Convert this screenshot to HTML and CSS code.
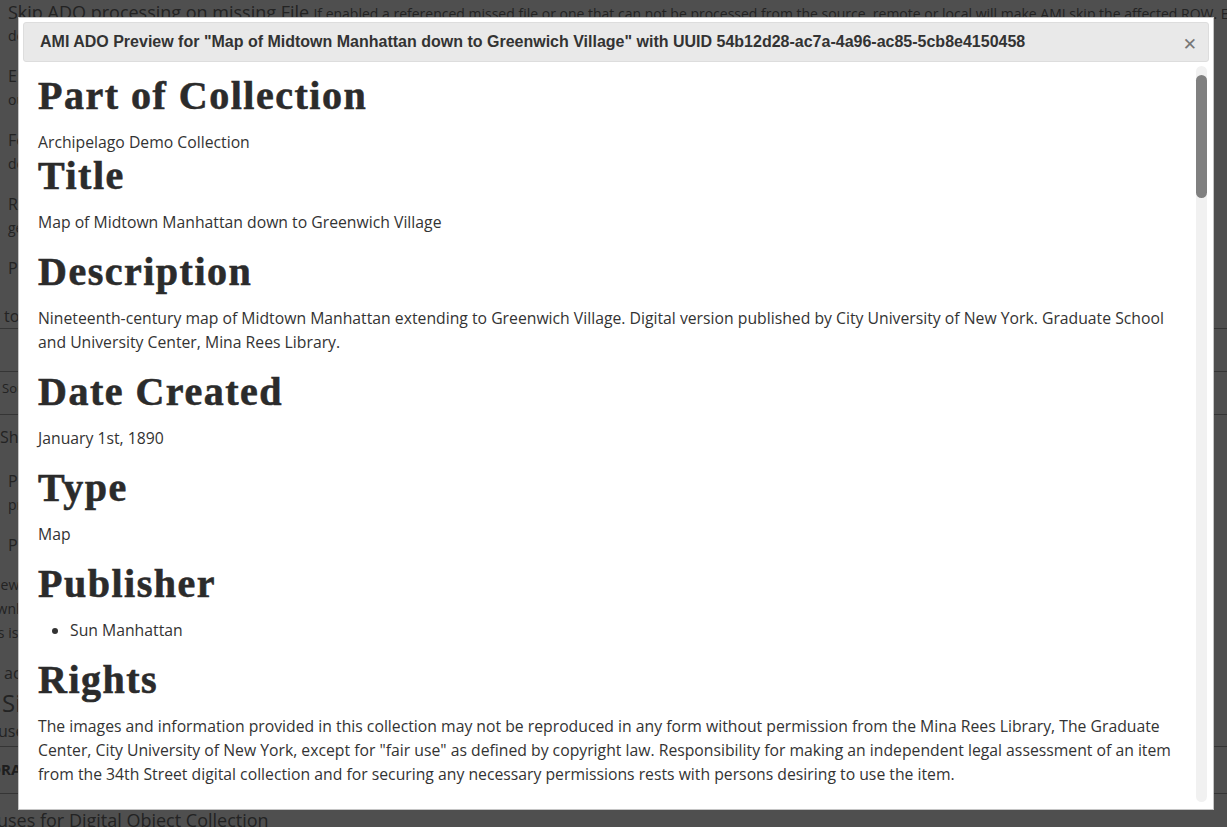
FILE: index.html
```html
<!DOCTYPE html>
<html lang="en">
<head>
<meta charset="utf-8">
<title>AMI ADO Preview</title>
<link rel="stylesheet" href="styles.css">
</head>
<body>
<div class="page">
  <div class="row"><span class="lbl-lg">Skip ADO processing on missing File</span> <span class="desc">If enabled a referenced missed file or one that can not be processed from the source, remote or local will make AMI skip the affected ROW. Enabled</span></div>
  <div class="row desc">default is disabled and the ROW will be processed without the missing file.</div>
  <div class="row gap16">Enable this to send a message to the Watchdog log for every Row processed. This allows more granular and individua</div>
  <div class="row desc">output of errors and processing information for each ADO.</div>
  <div class="row gap16">Fetch remote files during the processing of each ROW</div>
  <div class="row desc">default is to fetch them.</div>
  <div class="row gap16">Request Immediate Processing of all ADOs once they are ingested so they are ready to be displayed with all their alrea dy</div>
  <div class="row desc">generated derivatives and thumbnails.</div>
  <div class="row gap16">Process</div>
  <div class="row gap24 shift">to Digital Object Collection</div>
  <div class="trow"></div>
  <div class="trow small shift2">Source</div>
  <div class="trow shift3">Show row weights</div>
  <div class="row gap10">Pick</div>
  <div class="row desc">preview</div>
  <div class="row gap16">Process all rows. Please select the type of processing you want for this set and proceed with ingest and make sure you have a fit for the servi ce</div>
  <div class="row desc gap16 neg">Preview and verify before</div>
  <div class="row desc neg2">Download</div>
  <div class="row desc neg3">This is b</div>
  <div class="row gap16 shift">access</div>
  <div class="row big shift2">Single</div>
  <div class="row neg4">uses</div>
  <div class="brow"><b>DRAFT</b></div>
  <div class="brow2 lbl-lg">uses for Digital Object Collection</div>
</div>
<div class="overlay"></div>
<div class="dialog">
  <div class="titlebar">
    <span class="title">AMI ADO Preview for "Map of Midtown Manhattan down to Greenwich Village" with UUID 54b12d28-ac7a-4a96-ac85-5cb8e4150458</span>
    <span class="close">&#x2715;</span>
  </div>
  <div class="dialog-body">
    <div class="content">
      <h2>Part of Collection</h2>
      <div class="value first">Archipelago Demo Collection</div>
      <h2>Title</h2>
      <p>Map of Midtown Manhattan down to Greenwich Village</p>
      <h2>Description</h2>
      <p>Nineteenth-century map of Midtown Manhattan extending to Greenwich Village. Digital version published by City University of New York. Graduate School and University Center, Mina Rees Library.</p>
      <h2>Date Created</h2>
      <p>January 1st, 1890</p>
      <h2>Type</h2>
      <p>Map</p>
      <h2>Publisher</h2>
      <ul>
        <li>Sun Manhattan</li>
      </ul>
      <h2>Rights</h2>
      <p>The images and information provided in this collection may not be reproduced in any form without permission from the Mina Rees Library, The Graduate Center, City University of New York, except for "fair use" as defined by copyright law. Responsibility for making an independent legal assessment of an item from the 34th Street digital collection and for securing any necessary permissions rests with persons desiring to use the item.</p>
    </div>
    <div class="scrollbar"><div class="thumb"></div></div>
  </div>
</div>
</body>
</html>
```

FILE: styles.css
```css
html, body {
  margin: 0;
  padding: 0;
  height: 100%;
  overflow: hidden;
}
body {
  background: #ffffff;
  font-family: "Open Sans", "Noto Sans", sans-serif;
  color: #707070;
  font-size: 16px;
}
.page {
  padding-left: 8px;
  white-space: nowrap;
}
.row {
  line-height: 24px;
  height: 24px;
}
.lbl-lg { font-size: 18px; }
.desc { font-size: 14px; }
.gap16 { margin-top: 16px; }
.gap24 { margin-top: 24px; }
.gap10 { margin-top: 12px; }
.shift { margin-left: -4px; }
.shift2 { margin-left: -6px; }
.shift3 { margin-left: -8px; }
.neg { margin-left: -40px; }
.neg2 { margin-left: -30px; }
.neg3 { margin-left: -30px; }
.neg4 { margin-left: -10px; }
.small { font-size: 13px; }
.big { font-size: 24px; line-height: 32px; height: 32px; margin-top: 2px; }
.trow {
  border-top: 1px solid #aaaaaa;
  height: 42px;
  line-height: 32px;
  margin-left: -8px;
  padding-left: 8px;
}
.trow:first-of-type { margin-top: 2px; }
.trow.shift2, .trow.shift3 { padding-left: 2px; }
.trow.shift3 { padding-left: 0; line-height: 44px; }
.brow {
  border-top: 1px solid #aaaaaa;
  margin-top: 3px;
  margin-left: -8px;
  height: 46px;
  line-height: 44px;
  color: #606060;
  font-size: 15px;
  text-indent: -10px;
}
.brow2 {
  border-top: 1px solid #aaaaaa;
  margin-left: -8px;
  text-indent: -3px;
  line-height: 52px;
}
.overlay {
  position: fixed;
  inset: 0;
  background: rgba(0, 0, 0, 0.69);
}

/* Dialog */
.dialog {
  position: absolute;
  left: 18px;
  top: 17px;
  width: 1196px;
  height: 793px;
  box-sizing: border-box;
  border: 1px solid #c5c5c5;
  background: #ffffff;
  padding: 4px;
  display: flex;
  flex-direction: column;
  color: #333333;
}
.titlebar {
  height: 40px;
  box-sizing: border-box;
  border: 1px solid #dddddd;
  border-radius: 3px;
  background: #e9e9e9;
  display: flex;
  align-items: center;
  justify-content: space-between;
  padding: 0 11px 0 16px;
  flex: none;
}
.title {
  font-family: "Liberation Sans", Arial, sans-serif;
  font-weight: bold;
  font-size: 16px;
  color: #333333;
  white-space: nowrap;
}
.close {
  font-family: "DejaVu Sans", sans-serif;
  font-weight: bold;
  font-size: 17px;
  color: #777777;
  margin-top: 4px;
}
.dialog-body {
  flex: 1;
  display: flex;
  min-height: 0;
}
.content {
  flex: 1;
  overflow: hidden;
  padding: 12px 14px 0 15px;
  font-family: "Open Sans", "Noto Sans", sans-serif;
  font-size: 15.75px;
  line-height: 24px;
  color: #333333;
}
.content h2 {
  font-family: "Liberation Serif", "Times New Roman", serif;
  font-weight: bold;
  font-size: 40px;
  letter-spacing: 1.5px;
  line-height: 44px;
  margin: 0 0 12px 0;
  color: #2b2b2b;
  -webkit-text-stroke: 0.6px #2b2b2b;
}
.content p, .content .value {
  margin: 0 0 16px 0;
}
.content .value.first { margin-bottom: 0; }
.content ul {
  margin: 0 0 16px 0;
  padding-left: 32px;
}
.scrollbar {
  width: 11px;
  margin: 4px 2px 3px 0;
  background: #f1f1f1;
  border-radius: 6px;
  flex: none;
  padding-top: 9px;
  box-sizing: border-box;
}
.thumb {
  height: 123px;
  background: #808080;
  border-radius: 6px;
}
```
